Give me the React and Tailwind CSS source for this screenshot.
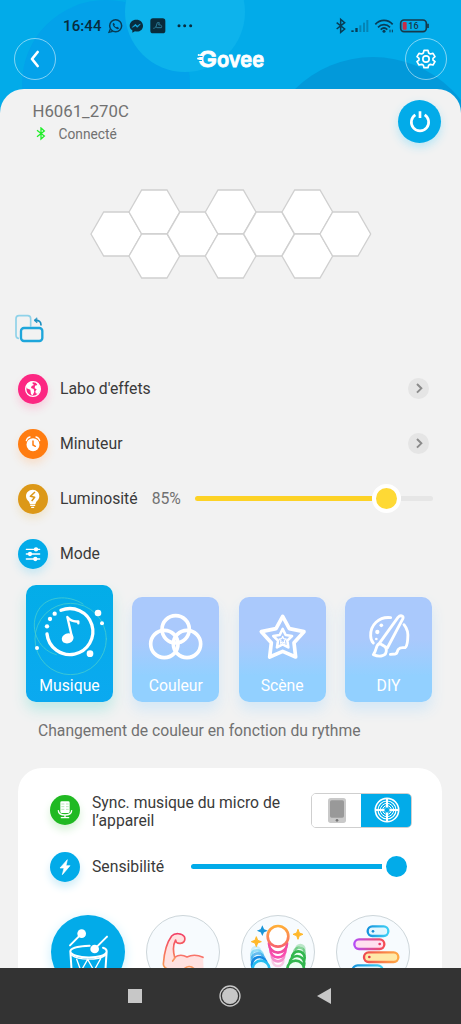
import React from "react";

function HeaderBackdrop() {
  return (
    <svg className="absolute inset-0" width="461" height="120" viewBox="0 0 461 120">
      <rect width="461" height="120" fill="#02abe9" />
      <circle cx="106" cy="84" r="84" fill="#03a2ea" />
      <circle cx="185" cy="12" r="60" fill="#0db3ec" />
      <circle cx="373" cy="168" r="111" fill="#0299da" />
    </svg>
  );
}

function StatusLeft() {
  return (
    <svg width="90" height="18" viewBox="0 0 270 54" fill="none">
      <circle cx="29" cy="26" r="18" stroke="#083c56" strokeWidth="4.5" />
      <path d="M13 36 L9 46 L20 43" stroke="#083c56" strokeWidth="4" />
      <path d="M22 17c-3 2-3 8 3 14s12 7 15 3l-6-5-4 2c-3-2-4-4-5-6l2-3z" fill="#083c56" />
      <path d="M91 8c-12 0-20 8-20 18 0 6 3 11 8 14v7l8-4c15 3 24-6 24-17 0-10-8-18-20-18z" fill="#082c3e" />
      <path d="M79 31l9-9 6 5 9-6-9 10-6-5z" fill="#12a8e0" stroke="#12a8e0" strokeWidth="2" />
      <rect x="133" y="4" width="45" height="45" rx="8" fill="#092b3b" />
      <path d="M142 34c5-1 7-2 8-5l4-12h6l-2 7c7-2 11 3 8 8h-13c-2 0-4-2-3-4" stroke="#2c7c99" strokeWidth="3" />
      <g fill="#082c3e">
        <circle cx="219" cy="26" r="4.500" />
        <circle cx="236" cy="26" r="4.500" />
        <circle cx="254" cy="26" r="4.500" />
      </g>
    </svg>
  );
}

function StatusRight() {
  return (
    <svg width="96" height="18" viewBox="0 0 288 54" fill="none">
      <path d="M8 17l24 19-12 10V7l12 10L8 36" stroke="#083c56" strokeWidth="4.500" />
      <g fill="#083c56">
        <rect x="52" y="40" width="7" height="5" />
        <rect x="64" y="33" width="7" height="12" />
        <rect x="76" y="25" width="6" height="20" opacity=".35" />
        <rect x="87" y="17" width="6" height="28" opacity=".35" />
        <rect x="97" y="9" width="6" height="36" opacity=".35" />
      </g>
      <g stroke="#083c56" strokeWidth="5">
        <path d="M124 22c14-16 38-16 52 0" />
        <path d="M132 31c10-11 26-11 36 0" />
        <path d="M140 38c6-6 14-6 20 0" />
      </g>
      <circle cx="150" cy="43" r="4.5" fill="#083c56" />
      <path d="M168 38v8m7-8v8" stroke="#083c56" strokeWidth="3" />
      <rect x="200" y="9" width="77" height="35" rx="10" stroke="#17394a" strokeWidth="5" />
      <path d="M282 20v13" stroke="#17394a" strokeWidth="5" />
      <rect x="206" y="15" width="12" height="23" rx="3" fill="#c92b45" />
      <text x="223" y="36" fontFamily="Roboto, sans-serif" fontSize="27" fontWeight="500" fill="#17394a">16</text>
    </svg>
  );
}

function Logo() {
  return (
    <svg width="72" height="32" viewBox="0 0 72 32">
      <g fontFamily="Inter, sans-serif" fontWeight="600" fill="#fff" stroke="#fff" strokeWidth=".8" strokeLinejoin="round">
        <text x="3" y="23.500" fontSize="22" textLength="19" lengthAdjust="spacingAndGlyphs">G</text>
        <text x="22" y="23.500" fontSize="21" textLength="47" lengthAdjust="spacingAndGlyphs">ovee</text>
      </g>
      <path d="M2.500 13.500h5M2.500 17.500h4.500" stroke="#02a8ea" strokeWidth="1.200" />
      <circle cx="3.800" cy="12" r="1.100" fill="#fff" />
      <circle cx="3.200" cy="15.600" r="1.100" fill="#fff" />
    </svg>
  );
}

function Gear() {
  return (
    <svg width="20" height="20" viewBox="0 0 60 60" fill="none" stroke="#fff" strokeWidth="5" strokeLinejoin="round">
      <path d="M24 4h12l2 8 5 3 8-2 6 10-6 5v5l6 5-6 10-8-2-5 3-2 7H24l-2-7-5-3-8 2-6-10 6-5v-5l-6-5 6-10 8 2 5-3z" />
      <circle cx="30" cy="30" r="9.500" />
    </svg>
  );
}

function Hexagons() {
  const centers = [[109, 162], [223, 96], [223, 228], [338, 162], [452, 96], [452, 228], [567, 162], [682, 96], [682, 228], [796, 162]];
  return (
    <svg className="ml-20 block shrink-0" width="300" height="110" viewBox="0 0 900 330">
      {centers.map(([x, y]) => (
        <path
          key={`${x}-${y}`}
          d={`M${x - 76} ${y}L${x - 38} ${y - 66}H${x + 38}L${x + 76} ${y}L${x + 38} ${y + 66}H${x - 38}Z`}
          fill="#fff"
          stroke="#d0d0d0"
          strokeWidth="4"
        />
      ))}
    </svg>
  );
}

function RotateIcon() {
  return (
    <svg width="30" height="30" viewBox="0 0 90 90" fill="none" strokeLinecap="round" strokeLinejoin="round">
      <path d="M13 73q-7-1-7-9V14q0-9 9-9h26q9 0 9 9v22" stroke="#8fd2e9" strokeWidth="5" />
      <rect x="21" y="42" width="64" height="39" rx="9" stroke="#1ea6db" strokeWidth="7" />
      <path d="M64 19q17-1 17 14" stroke="#1c8fc0" strokeWidth="5" />
      <path d="M68 12l-8 7 8 7z" fill="#1c8fc0" stroke="#1c8fc0" strokeWidth="2" />
    </svg>
  );
}

const glyphs = {
  globe: (
    <g>
      <circle cx="45" cy="45" r="22" stroke="#fff" strokeWidth="4" fill="none" />
      <path d="M25 34q7-12 20-12l-2 6 5 5-7 3-2 6 8 3 2 8-5 11-5-3-2-14-11-4z" fill="#fff" />
      <path d="M54 26q13 7 13 22l-7 12-7-2-1-6 4-6-6-3 1-8 7-2z" fill="#fff" />
    </g>
  ),
  clock: (
    <g>
      <circle cx="45" cy="47" r="19.500" fill="#fff" />
      <path d="M25 35q2-9 11-11M54 24q9 2 11 11" stroke="#fff" strokeWidth="4" fill="none" strokeLinecap="round" />
      <path d="M45 36v12l7 4" stroke="#ff7c10" strokeWidth="4.500" fill="none" strokeLinecap="round" />
    </g>
  ),
  bulb: (
    <g>
      <path d="M44 17c-12 0-20 9-20 19 0 8 4 13 9 17l3 8h16l3-8c5-4 9-9 9-17 0-10-8-19-20-19z" fill="#fff" />
      <path d="M38 64h12M41 70h6" stroke="#fff" strokeWidth="4" strokeLinecap="round" />
      <path d="M51 24L37 37l13 3-9 11" stroke="#dc9818" strokeWidth="4.500" fill="none" strokeLinejoin="round" />
    </g>
  ),
  sliders: (
    <g stroke="#fff" strokeWidth="4" strokeLinecap="round" fill="#fff">
      <path d="M25 31h40M25 45h40M25 60h40" />
      <circle cx="54" cy="31" r="4.500" />
      <circle cx="36" cy="45" r="4.500" />
      <circle cx="52" cy="60" r="4.500" />
    </g>
  ),
  mic: (
    <g>
      <rect x="31" y="19" width="28" height="35" rx="4" fill="#fff" />
      <path d="M34 27h9M34 35h9M34 43h9M48 27h8M48 35h8M48 43h8" stroke="#a9e5aa" strokeWidth="2.500" />
      <path d="M25 47q1 13 20 13t20-13M45 60v8M34 68h22" fill="none" stroke="#fff" strokeWidth="4" strokeLinecap="round" />
    </g>
  ),
  bolt: <path d="M52 23L30 48h12l-5 20 23-27H48z" fill="#fff" stroke="#fff" strokeWidth="2" strokeLinejoin="round" />,
};

function RoundIcon({ glyph, tone }) {
  return (
    <span className={`flex size-[30px] shrink-0 items-center justify-center rounded-full ${tone}`}>
      <svg width="30" height="30" viewBox="0 0 90 90">{glyphs[glyph]}</svg>
    </span>
  );
}

function Chevron() {
  return (
    <span className="ml-auto mr-8 flex size-[21px] items-center justify-center rounded-full bg-[#e5e5e5]">
      <svg width="21" height="21" viewBox="0 0 63 63">
        <path d="M27 18l13 13-13 13" fill="none" stroke="#8b8b8b" strokeWidth="6" />
      </svg>
    </span>
  );
}

function Row({ glyph, tone, label, children }) {
  return (
    <div className="flex h-[55px] shrink-0 items-center pl-[18px]">
      <RoundIcon glyph={glyph} tone={tone} />
      <span className="ml-3 text-[15.75px] text-[#3a3a3a]">{label}</span>
      {children}
    </div>
  );
}

const cardArt = {
  music: (
    <g fill="none" stroke="#fff" strokeLinecap="round">
      <circle cx="134" cy="162" r="107" stroke="#45cbd0" strokeWidth="2.500" />
      <path d="M171 57C125 27 62 34 38 74C8 122 31 193 91 209" stroke="#45cbd0" strokeWidth="2.500" />
      <path d="M105 76A69 69 0 1 1 63 147" strokeWidth="10" />
      <g fill="#fff" stroke="none">
        <circle cx="86" cy="86" r="6.500" />
        <circle cx="72" cy="102" r="6.500" />
        <circle cx="63" cy="124" r="6.500" />
        <circle cx="216" cy="84" r="10" />
        <circle cx="228" cy="115" r="6" />
        <circle cx="192" cy="206" r="10" />
        <circle cx="33" cy="189" r="6" />
        <ellipse cx="125" cy="160" rx="18" ry="15" transform="rotate(-20 125 160)" />
      </g>
      <path d="M138 157L124 96q13 16 33 13v6" strokeWidth="7" strokeLinejoin="round" />
    </g>
  ),
  color: (
    <g fill="none" stroke="#fff" strokeWidth="11">
      <circle cx="131" cy="97" r="41" />
      <circle cx="97" cy="141" r="41" />
      <circle cx="165" cy="141" r="41" />
    </g>
  ),
  scene: (
    <g fill="none" stroke="#fff" strokeLinejoin="round">
      <path d="M131 58l20 37 44 9-30 33 5 43-39-17-39 17 5-43-30-33 44-9z" strokeWidth="11" />
      <path d="M131 96l9 18 19 3-14 14 3 20-17-9-17 9 3-20-14-14 19-3z" strokeWidth="8" />
      <path d="M131 118l3 7 8 1-6 5 2 8-7-4-7 4 2-8-6-5 8-1z" strokeWidth="3.500" />
    </g>
  ),
  diy: (
    <g fill="none" stroke="#fff" strokeWidth="8.500" strokeLinecap="round" strokeLinejoin="round">
      <path d="M137 62c-36-4-61 23-60 54 0 9 3 17 8 22M177 83c11 13 13 31 11 45-1 12-4 22-8 24-8 0-14-2-20 5-5 6-1 13-10 14l-14 1" />
      <path d="M103 139l56-78q7-8 14-3 3 4-1 10l-45 85zM103 140c-12 5-7 20-18 33 20 9 40 4 39-14 0-8-4-13-21-19z" />
      <g fill="#fff" stroke="none">
        <circle cx="97" cy="105" r="6.500" />
        <circle cx="109" cy="85" r="5.500" />
        <circle cx="94" cy="126" r="4" />
      </g>
    </g>
  ),
};

function ModeCard({ label, art, active }) {
  return active ? (
    <div className="flex h-[117px] w-[87px] flex-col items-center rounded-[10px] bg-gradient-to-b from-[#03ade8] to-[#0ba9f0] shadow-[0_8px_14px_#bfeae6]">
      <svg className="shrink-0" width="87" height="90" viewBox="0 0 261 270">{cardArt[art]}</svg>
      <span className="text-[15.75px] leading-[22px] text-white">{label}</span>
    </div>
  ) : (
    <div className="flex h-[105px] w-[87px] flex-col items-center rounded-[10px] bg-gradient-to-b from-[#aac9fc] from-40% to-[#92d0ff] to-75% shadow-[0_8px_14px_#d5e8f6]">
      <svg className="shrink-0" width="87" height="78" viewBox="0 0 261 234">{cardArt[art]}</svg>
      <span className="text-[15.75px] leading-[22px] text-white">{label}</span>
    </div>
  );
}

function SourceToggle() {
  return (
    <div className="ml-auto mr-[30px] flex h-[35px] w-[101px] overflow-hidden rounded-[5px] border border-[#cfcfcf]">
      <span className="flex w-[49px] items-center justify-center bg-white">
        <svg width="18" height="25" viewBox="0 0 54 75">
          <rect width="54" height="75" rx="8" fill="#c9c9c9" />
          <rect x="6" y="7" width="42" height="52" rx="5" fill="#999" />
          <circle cx="27" cy="67" r="4" fill="#777" />
        </svg>
      </span>
      <span className="-my-px -mr-px flex flex-1 items-center justify-center bg-[#02abe9]">
        <svg width="26" height="26" viewBox="0 0 78 78" fill="none" stroke="#fff">
          <circle cx="39" cy="39" r="35" strokeWidth="5" />
          <circle cx="39" cy="39" r="27" strokeWidth="3.500" />
          <circle cx="39" cy="39" r="20" strokeWidth="3" />
          <circle cx="39" cy="39" r="13" strokeWidth="3" />
          <path d="M39 5v68M5 39h68" strokeWidth="6" />
          <circle cx="39" cy="39" r="8" fill="#02abe9" strokeWidth="1" />
        </svg>
      </span>
    </div>
  );
}

const effectArt = {
  drum: (
    <g fill="none" stroke="#fff" strokeWidth="6" strokeLinecap="round">
      <path d="M57 91l29-29" />
      <circle cx="92" cy="56" r="13" fill="#fff" stroke="none" />
      <path d="M135 98l33-33" />
      <circle cx="131" cy="102" r="13" fill="#fff" stroke="none" />
      <path d="M116 92c-31 1-58 7-58 17 0 23 109 26 109 0 0-5-4-9-11-11M58 109l6 90M167 109l-6 90" />
      <path d="M62 121c20 15 80 15 101 0M77 133l13 35 20-35 19 34 20-36M90 168v30M129 168v30" strokeWidth="4" />
    </g>
  ),
  muscle: (
    <g fill="none" strokeWidth="5" strokeLinecap="round" strokeLinejoin="round">
      <path d="M53 147C54 118 62 83 77 65c9-10 31-10 38 1 6 12-3 21-15 19l-9-7c-8 12-8 31-3 50 14-9 25-8 35-2 14-7 31-6 48-1l4 80H62z" fill="#ffe1e0" />
      <path d="M68 163c-10-3-16-8-16-16C54 118 62 83 77 63c9-10 31-9 38 2 5 12-3 21-14 20-7 0-12-4-12-10-8 14-8 34-3 52" stroke="url(#arm)" />
      <path d="M86 127c13-9 26-7 37-1 14-7 33-6 48 1" stroke="#f8746a" />
      <path d="M87 128l-7 10M112 164c10-12 24-13 34-1" stroke="#f9975f" />
    </g>
  ),
  fountain: (
    <g fill="none" strokeWidth="8">
      <g fill="#e8f8ff" stroke="#24bdf0">
        <circle cx="45" cy="108" r="12" opacity=".2" />
        <ellipse cx="48" cy="121" rx="17" ry="15" opacity=".45" />
        <circle cx="51" cy="134" r="19" stroke="#229ee9" opacity=".65" />
        <circle cx="55" cy="148" r="22" stroke="#1489e2" />
        <circle cx="60" cy="162" r="25" />
      </g>
      <g fill="#ecfff4" stroke="#32b74f">
        <circle cx="178" cy="102" r="12" opacity=".3" />
        <circle cx="175" cy="114" r="16" opacity=".55" />
        <circle cx="172" cy="128" r="19" />
        <circle cx="168" cy="145" r="22" />
        <circle cx="164" cy="162" r="25" />
      </g>
      <g fill="#fff">
        <circle cx="111" cy="137" r="16" stroke="#f9c9e5" />
        <circle cx="111" cy="120" r="19" stroke="#f48fcb" />
        <circle cx="111" cy="104" r="23" stroke="#f84fb0" />
        <circle cx="111" cy="86" r="27" stroke="#f04ca0" />
        <circle cx="111" cy="64" r="31" stroke="url(#ball)" />
      </g>
      <path d="M64 37l3 7 7 3-7 3-3 7-3-7-7-3 7-3z" fill="#1895d8" stroke="#1895d8" strokeWidth="5" />
      <path d="M46 65l4 11 11 4-11 4-4 11-4-11-11-4 11-4zM171 43l4 11 11 4-11 4-4 11-4-11-11-4 11-4z" fill="#ffb82b" stroke="#ffb82b" strokeWidth="3" />
    </g>
  ),
  bars: (
    <g strokeWidth="7">
      <rect x="95" y="34" width="62" height="29" rx="14" fill="#e3f7ff" stroke="url(#barBlue)" />
      <rect x="55" y="73" width="90" height="29" rx="14" fill="#ffe0ef" stroke="url(#barPink)" />
      <rect x="84" y="112" width="103" height="29" rx="14" fill="#ffe9a8" stroke="url(#barRed)" />
      <rect x="50" y="151" width="90" height="30" rx="15" fill="#e3f7ff" stroke="url(#barBlue)" />
      <circle cx="111" cy="49" r="4" fill="#168dd5" />
      <circle cx="131" cy="87" r="4" fill="#e83c67" />
      <circle cx="100" cy="126" r="4" fill="#e53b48" />
    </g>
  ),
};

function Gradients() {
  return (
    <defs>
      <linearGradient id="arm" x1="0" y1="0" x2="0" y2="1"><stop stopColor="#f34167" /><stop offset="1" stopColor="#f9a055" /></linearGradient>
      <linearGradient id="ball" x1="0" y1="0" x2="0" y2="1"><stop stopColor="#ffae38" /><stop offset="1" stopColor="#f8666b" /></linearGradient>
      <linearGradient id="barBlue"><stop stopColor="#1593dc" /><stop offset="1" stopColor="#3fd0f5" /></linearGradient>
      <linearGradient id="barPink"><stop stopColor="#b44df7" /><stop offset="1" stopColor="#f64d52" /></linearGradient>
      <linearGradient id="barRed"><stop stopColor="#ef4b50" /><stop offset="1" stopColor="#ffa944" /></linearGradient>
    </defs>
  );
}

function Effect({ art, active }) {
  return (
    <span className={active
      ? "flex size-[74px] shrink-0 overflow-hidden rounded-full bg-[#02abe9] shadow-[0_3px_12px_#c9effb]"
      : "flex size-[74px] shrink-0 overflow-hidden rounded-full border border-[#cdd6da] bg-[#f7fbfe]"}>
      <svg width="74" height="74" viewBox="0 0 222 222" className={active ? "shrink-0" : "-m-px shrink-0"}>
        <Gradients />
        {effectArt[art]}
      </svg>
    </span>
  );
}

export default function App() {
  return (
    <div className="flex h-[1024px] w-[461px] flex-col overflow-hidden bg-[#f2f2f2] font-[Roboto,sans-serif]">
      <header className="relative h-[120px] shrink-0 overflow-hidden">
        <HeaderBackdrop />
        <div className="relative flex h-[38px] items-end pl-[63px] pr-[31px]">
          <span className="mb-[2px] w-[43px] text-[15px] font-medium leading-[20px] tracking-[0.1px] text-[#082c3e]">16:44</span>
          <div className="mb-[3px]"><StatusLeft /></div>
          <div className="mb-[3px] ml-auto"><StatusRight /></div>
        </div>
        <div className="relative flex h-[42px] items-center justify-between px-[14px]">
          <span className="flex size-[42px] items-center justify-center rounded-full border border-white/50">
            <svg width="14" height="20" viewBox="0 0 42 60"><path d="M29 9L12 30l17 21" fill="none" stroke="#fff" strokeWidth="8" strokeLinecap="round" strokeLinejoin="round" /></svg>
          </span>
          <Logo />
          <span className="flex size-[42px] items-center justify-center rounded-full border border-white/50">
            <Gear />
          </span>
        </div>
      </header>

      <main className="relative -mt-[31px] flex h-[879px] shrink-0 flex-col overflow-hidden rounded-t-[24px] bg-[#f2f2f2]">
        <section className="flex h-[91px] shrink-0 justify-between pl-[32.500px] pr-[20px] pt-[11px]">
          <div>
            <h1 className="text-[16.75px] leading-[22px] text-[#717171]">H6061_270C</h1>
            <p className="mt-px flex items-center text-[13.75px] leading-[22px] text-[#717171]">
              <svg className="ml-[3px] mr-[13px]" width="10" height="14" viewBox="0 0 30 42">
                <path d="M3 10l22 17-10 9V3l10 9L3 29" fill="none" stroke="#20ee2a" strokeWidth="4" />
              </svg>
              Connecté
            </p>
          </div>
          <span className="flex size-[43px] items-center justify-center rounded-full bg-[#02abe9] shadow-[0_4px_10px_#b6e6f6]">
            <svg width="24" height="24" viewBox="0 0 72 72" fill="none" stroke="#fff" strokeWidth="8">
              <path d="M22 14.500a26 26 0 1 0 28 0" />
              <path d="M36 4v20" />
            </svg>
          </span>
        </section>

        <Hexagons />

        <div className="h-[71px] shrink-0 pl-[14px] pt-[24px]"><RotateIcon /></div>

        <Row glyph="globe" tone="bg-[#fc2782] shadow-[0_5px_9px_#f7cddd]" label="Labo d'effets"><Chevron /></Row>
        <Row glyph="clock" tone="bg-[#ff7c10] shadow-[0_5px_9px_#f7dfcb]" label="Minuteur"><Chevron /></Row>
        <Row glyph="bulb" tone="bg-[#dc9818] shadow-[0_5px_9px_#efe4cd]" label="Luminosité">
          <span className="ml-[14px] text-[15.75px] text-[#717171]">85%</span>
          <div className="ml-auto mr-7 flex h-[29px] w-[238px] items-center">
            <span className="h-[5px] w-[177px] rounded-l-full bg-[#fdd225]" />
            <span className="size-[29px] shrink-0 rounded-full border-4 border-white bg-[#fed935]" />
            <span className="h-[5px] flex-1 rounded-r-full bg-[#e6e6e6]" />
          </div>
        </Row>
        <Row glyph="sliders" tone="bg-[#02abe9] shadow-[0_5px_9px_#c8e8f3]" label="Mode" />

        <section className="flex h-[121px] shrink-0 items-end justify-between pl-[26px] pr-[29px]">
          <ModeCard label="Musique" art="music" active />
          <ModeCard label="Couleur" art="color" />
          <ModeCard label="Scène" art="scene" />
          <ModeCard label="DIY" art="diy" />
        </section>
        <p className="h-[66px] shrink-0 pl-[38px] pt-[18px] text-[15.7px] leading-[22px] text-[#717171]">Changement de couleur en fonction du rythme</p>

        <section className="ml-[18px] flex h-[300px] w-[424px] shrink-0 flex-col rounded-t-[24px] bg-white">
          <div className="flex h-[70px] shrink-0 items-center pl-[32px] pt-[14px]">
            <RoundIcon glyph="mic" tone="bg-[#20b922] shadow-[0_5px_9px_#d7f2d7]" />
            <p className="ml-3 whitespace-nowrap pt-[3px] text-[15.7px] leading-[18px] text-[#3a3a3a]">Sync. musique du micro de<br />l’appareil</p>
            <SourceToggle />
          </div>
          <div className="flex h-[57px] shrink-0 items-center pl-[32px]">
            <RoundIcon glyph="bolt" tone="bg-[#02abe9] shadow-[0_5px_9px_#cfedf8]" />
            <span className="ml-3 text-[15.75px] text-[#3a3a3a]">Sensibilité</span>
            <span className="ml-auto h-[5px] w-[191px] rounded-l-full bg-[#02abe9]" />
            <span className="ml-[4px] mr-[35px] size-[21px] rounded-full bg-[#02abe9]" />
          </div>
          <div className="flex justify-between pl-[33px] pr-[32px] pt-5">
            <Effect art="drum" active />
            <Effect art="muscle" />
            <Effect art="fountain" />
            <Effect art="bars" />
          </div>
        </section>
      </main>

      <nav className="flex h-14 shrink-0 items-center bg-[#333]">
        <span className="ml-[128px] size-[14px] bg-[#c7c7c7]" />
        <svg className="ml-[77px]" width="22" height="22" viewBox="0 0 66 66">
          <circle cx="33" cy="33" r="30" fill="none" stroke="#c7c7c7" strokeWidth="4" />
          <circle cx="33" cy="33" r="24" fill="#c7c7c7" />
        </svg>
        <svg className="ml-[76px]" width="14" height="16" viewBox="0 0 14 16"><path d="M0 8L14 0v16z" fill="#c7c7c7" /></svg>
      </nav>
    </div>
  );
}
